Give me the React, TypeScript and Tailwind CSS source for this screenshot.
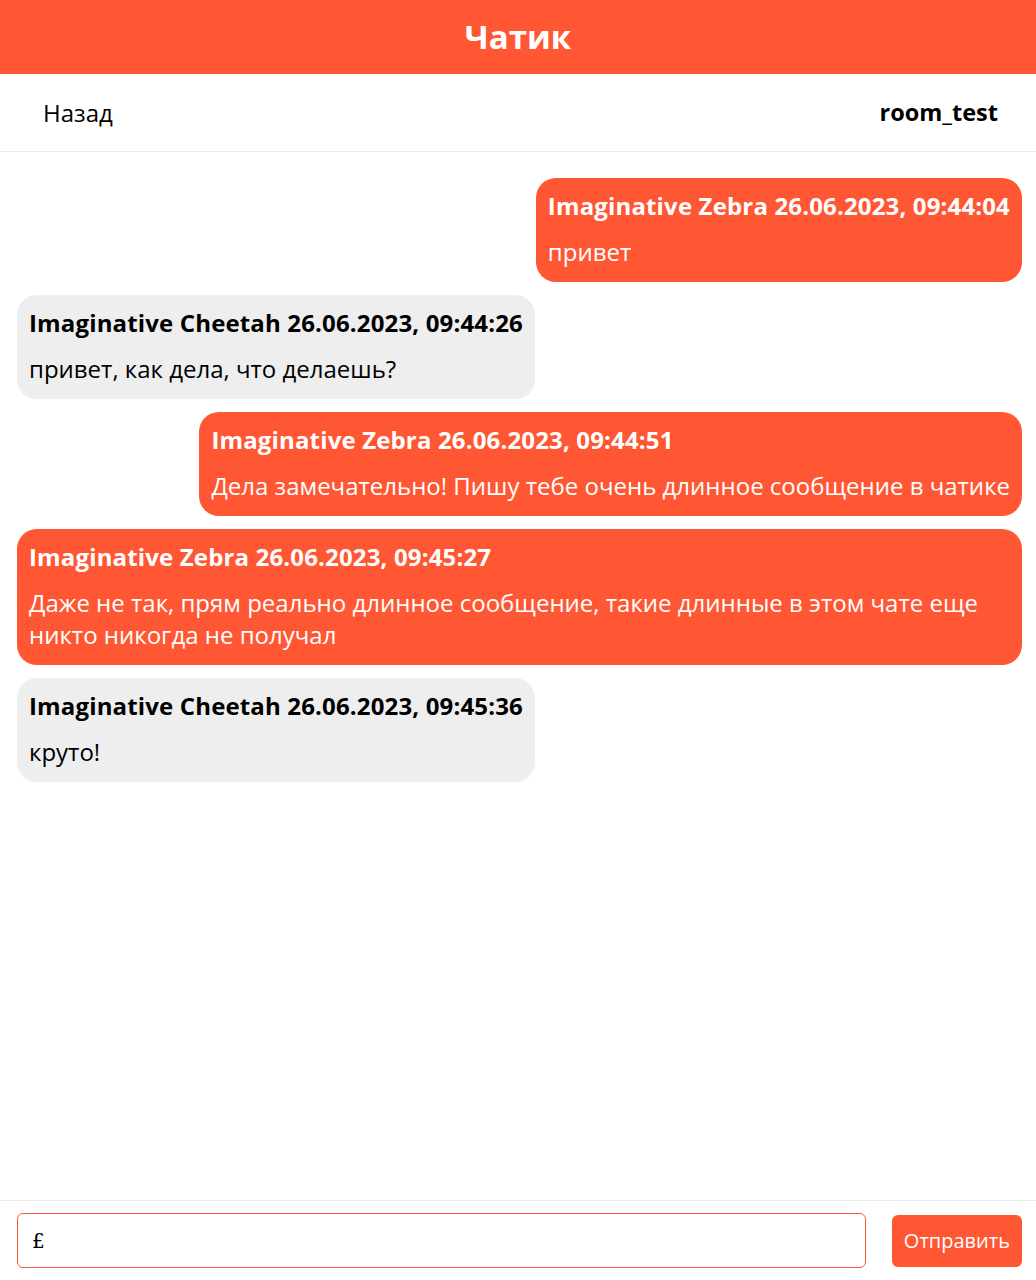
const messages = [
  { mine: true, author: "Imaginative Zebra", time: "26.06.2023, 09:44:04", text: "привет" },
  { mine: false, author: "Imaginative Cheetah", time: "26.06.2023, 09:44:26", text: "привет, как дела, что делаешь?" },
  { mine: true, author: "Imaginative Zebra", time: "26.06.2023, 09:44:51", text: "Дела замечательно! Пишу тебе очень длинное сообщение в чатике" },
  {
    mine: true,
    author: "Imaginative Zebra",
    time: "26.06.2023, 09:45:27",
    text: "Даже не так, прям реально длинное сообщение, такие длинные в этом чате еще никто никогда не получал",
  },
  { mine: false, author: "Imaginative Cheetah", time: "26.06.2023, 09:45:36", text: "круто!" },
];

const Message = ({ mine, author, time, text }: (typeof messages)[number]) => {
  return (
    <div
      className={
        mine
          ? "self-end max-w-full rounded-[20px] bg-[#ff5733] px-3 pt-3 pb-[14px] text-white"
          : "self-start max-w-full rounded-[20px] bg-[#eeeeee] px-3 pt-3 pb-[14px] text-black"
      }
    >
      <p className="text-[24px] font-bold leading-8 tracking-[0.15px]">
        {author} {time}
      </p>
      <p className="mt-[14px] text-[24px] leading-8">{text}</p>
    </div>
  );
};

export default function App() {
  return (
    <div className="flex h-[1280px] flex-col bg-white font-['Open_Sans',sans-serif] text-black">
      <header className="flex h-[74px] shrink-0 items-center justify-center bg-[#ff5733]">
        <h1 className="text-[33px] font-bold text-white">Чатик</h1>
      </header>

      <nav className="flex h-[78px] shrink-0 items-center justify-between border-b border-[#ebebeb] pl-[43px] pr-[38px] text-[24px]">
        <a href="#">Назад</a>
        <span className="text-[23.5px] font-bold">room_test</span>
      </nav>

      <main className="flex flex-1 flex-col gap-[13px] overflow-hidden pl-[17px] pr-[14px] pt-[26px]">
        {messages.map((m, i) => (
          <Message key={i} {...m} />
        ))}
      </main>

      <footer className="flex h-[80px] shrink-0 items-center gap-[26px] border-t border-[#ebebeb] pl-[17px] pr-[14px]">
        <input
          defaultValue="£"
          className="h-[55px] flex-1 rounded-md border border-[#ff5733] px-[14px] font-['DejaVu_Serif',serif] text-[20px] outline-none"
        />
        <button className="h-[52px] rounded-md bg-[#ff5733] px-3 text-[20px] text-white">Отправить</button>
      </footer>
    </div>
  );
}
